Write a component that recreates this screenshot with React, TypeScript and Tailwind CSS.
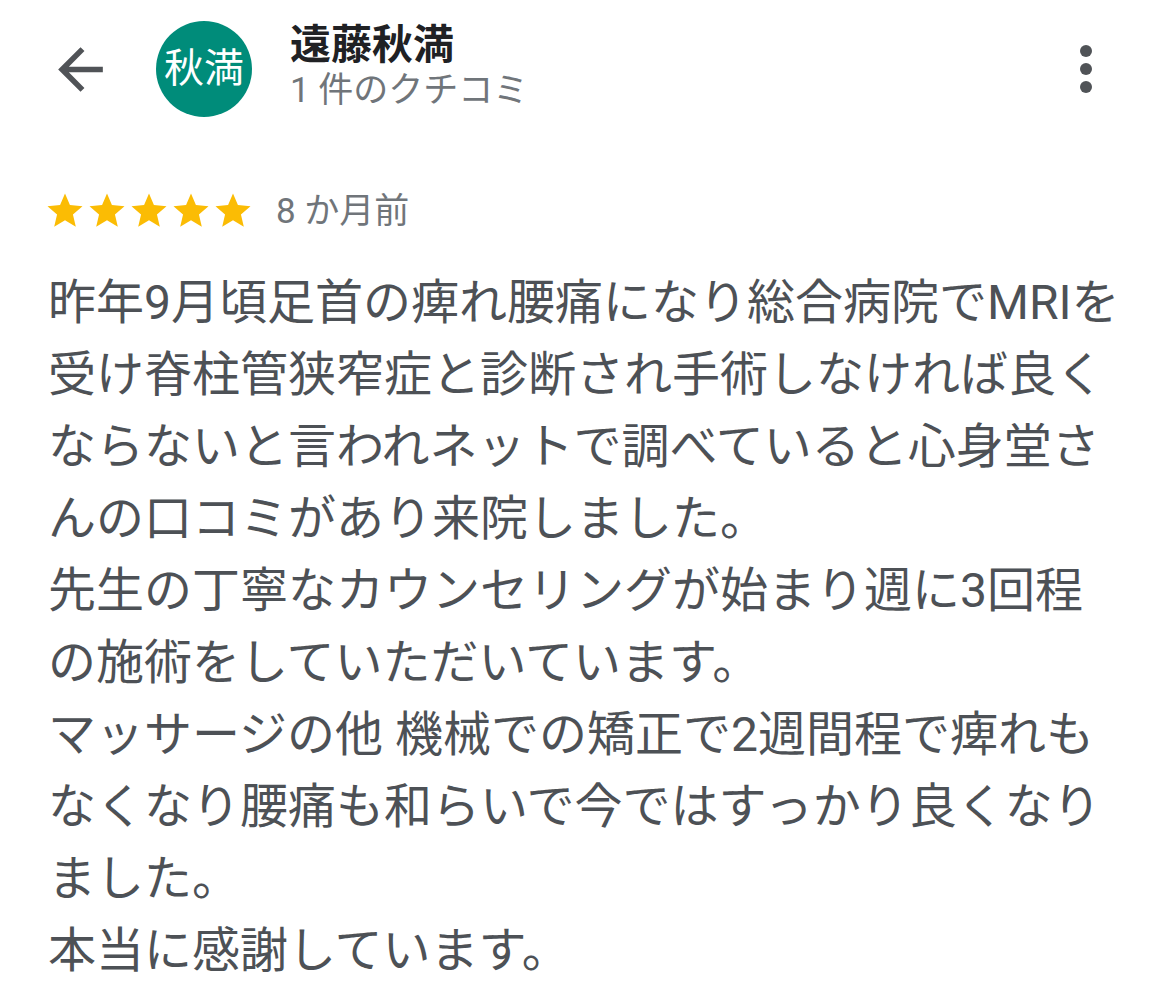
import React from 'react';

const lines = [
  '昨年9月頃足首の痺れ腰痛になり総合病院でMRIを',
  '受け脊柱管狭窄症と診断され手術しなければ良く',
  'ならないと言われネットで調べていると心身堂さ',
  'んの口コミがあり来院しました。',
  '先生の丁寧なカウンセリングが始まり週に3回程',
  'の施術をしていただいています。',
  'マッサージの他 機械での矯正で2週間程で痺れも',
  'なくなり腰痛も和らいで今ではすっかり良くなり',
  'ました。',
  '本当に感謝しています。',
];

function Star() {
  return (
    <svg viewBox="0 0 24 24" className="w-[42px] h-[42px]" fill="#fbbc04">
      <path d="M12 17.27L18.18 21l-1.64-7.03L22 9.24l-7.19-.61L12 2 9.19 8.63 2 9.24l5.46 4.73L5.82 21z" />
    </svg>
  );
}

export default function App() {
  return (
    <div className="w-[1170px] h-[1006px] bg-white overflow-hidden font-['Roboto','Noto_Sans_CJK_JP',sans-serif]">
      {/* Header */}
      <div className="flex items-center h-[96px] mt-[21px] pr-[48px]">
        <svg viewBox="0 0 24 24" className="w-[67px] h-[67px] ml-[47px] shrink-0" fill="#505357">
          <path d="M20 11H7.83l5.59-5.59L12 4l-8 8 8 8 1.41-1.41L7.83 13H20v-2z" />
        </svg>
        <div className="ml-[42px] w-[96px] h-[96px] rounded-full bg-[#008c7a] flex items-center justify-center shrink-0">
          <span className="text-white text-[40px] leading-none">秋満</span>
        </div>
        <div className="ml-[38px] flex flex-col self-start">
          <div className="text-[41px] leading-[48px] font-bold text-[#202124]">遠藤秋満</div>
          <div className="text-[35px] leading-[44px] text-[#70757a]">1 件のクチコミ</div>
        </div>
        <svg viewBox="0 0 24 24" className="w-[72px] h-[72px] ml-auto shrink-0" fill="#505357">
          <circle cx="12" cy="6" r="2" />
          <circle cx="12" cy="12" r="2" />
          <circle cx="12" cy="18" r="2" />
        </svg>
      </div>

      {/* Rating */}
      <div className="flex items-center h-[40px] mt-[74px] ml-[44px]">
        <div className="flex">
          {[0, 1, 2, 3, 4].map((i) => (
            <Star key={i} />
          ))}
        </div>
        <span className="ml-[22px] text-[35px] leading-none text-[#70757a]">8 か月前</span>
      </div>

      {/* Review body */}
      <div className="mt-[36px] ml-[48px] text-[48px] leading-[72px] text-[#4d5156]">
        {lines.map((line, idx) => (
          <div key={idx} className="whitespace-nowrap">
            {line}
          </div>
        ))}
      </div>
    </div>
  );
}
